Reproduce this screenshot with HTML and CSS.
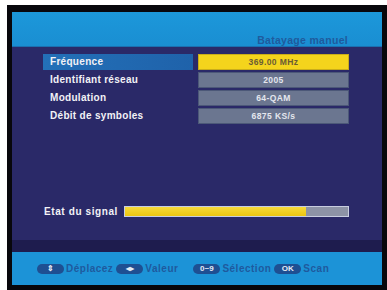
FILE: index.html
```html
<!DOCTYPE html>
<html lang="fr">
<head>
    <meta charset="UTF-8">
    <title>Balayage manuel</title>
    <link rel="stylesheet" href="styles.css">
</head>
<body>
    <div class="tv">
        <div class="screen">
            <div class="header">
                <span class="title">Batayage manuel</span>
            </div>
            <div class="content">
                <div class="rows">
                    <div class="row">
                        <div class="label active">Fréquence</div>
                        <div class="value selected">369.00 MHz</div>
                    </div>
                    <div class="row">
                        <div class="label">Identifiant réseau</div>
                        <div class="value">2005</div>
                    </div>
                    <div class="row">
                        <div class="label">Modulation</div>
                        <div class="value">64-QAM</div>
                    </div>
                    <div class="row">
                        <div class="label">Débit de symboles</div>
                        <div class="value">6875 KS/s</div>
                    </div>
                </div>
                <div class="signal">
                    <span class="signal-label">Etat du signal</span>
                    <div class="bar"><div class="bar-fill" style="width: 81%"></div></div>
                </div>
            </div>
            <div class="band"></div>
            <div class="footer">
                <span class="key">&#8661;</span><span class="hint">Déplacez</span>
                <span class="key">&#9666;&#9656;</span><span class="hint wide">Valeur</span>
                <span class="key">0~9</span><span class="hint">Sélection</span>
                <span class="key">OK</span><span class="hint">Scan</span>
            </div>
        </div>
    </div>
</body>
</html>
```

FILE: styles.css
```css
body {
    margin: 0;
    background: #ffffff;
    font-family: "Liberation Sans", Arial, sans-serif;
    font-weight: bold;
}
.tv {
    margin: 5px 0 0 7px;
    width: 380px;
    height: 285px;
    box-sizing: border-box;
    padding: 7px 5px 5px 5px;
    background: #08070c;
}
.screen {
    height: 273px;
    display: flex;
    flex-direction: column;
    background: #2a2968;
}
.header {
    height: 35px;
    box-sizing: border-box;
    background: linear-gradient(#1c98da, #1a8ed2);
    border-bottom: 1px solid #1b6fb0;
    display: flex;
    justify-content: flex-end;
    align-items: flex-end;
    padding: 0 34px 0 0;
}
.title {
    font-size: 10.5px;
    line-height: 12px;
    color: #1f5b9d;
    letter-spacing: 0.3px;
}
.content {
    height: 193px;
    box-sizing: border-box;
    padding: 7px 33px 0 31px;
    display: flex;
    flex-direction: column;
}
.rows {
    display: flex;
    flex-direction: column;
    gap: 2px;
}
.row {
    display: flex;
    gap: 5px;
    height: 16px;
}
.label {
    width: 150px;
    box-sizing: border-box;
    padding-left: 7px;
    font-size: 10px;
    line-height: 16px;
    color: #f2f2f6;
    letter-spacing: 0.3px;
}
.label.active {
    background: linear-gradient(90deg, #2370b8, #1f62aa);
}
.value {
    flex: 1;
    box-sizing: border-box;
    border: 1px solid #4c5878;
    background: #6b7690;
    color: #e4e6ee;
    font-size: 8.5px;
    line-height: 14px;
    text-align: center;
    letter-spacing: 0.4px;
}
.value.selected {
    background: #f4d41c;
    border-color: #c9ad1a;
    color: #6a5c35;
}
.signal {
    margin-top: 82px;
    display: flex;
    align-items: center;
    gap: 6px;
    padding-left: 1px;
}
.signal-label {
    font-size: 10px;
    color: #f2f2f6;
    letter-spacing: 0.6px;
}
.bar {
    flex: 1;
    height: 11px;
    box-sizing: border-box;
    border: 1px solid #c8cde0;
    background: #8d93a6;
}
.bar-fill {
    height: 100%;
    background: linear-gradient(#f6da3a, #ecc511);
}
.band {
    height: 12px;
    background: #1e1c4e;
}
.footer {
    flex: 1;
    background: #1c93d7;
    display: flex;
    align-items: center;
    padding-left: 25px;
}
.key {
    width: 27px;
    height: 10px;
    border-radius: 5px;
    background: #1e4f92;
    color: #e6ecf6;
    font-size: 8px;
    line-height: 10px;
    text-align: center;
    margin-right: 2px;
}
.hint {
    font-size: 10px;
    color: #1f5a9e;
    margin-right: 3px;
    letter-spacing: 0.5px;
}
.hint.wide {
    margin-right: 15px;
}
```
